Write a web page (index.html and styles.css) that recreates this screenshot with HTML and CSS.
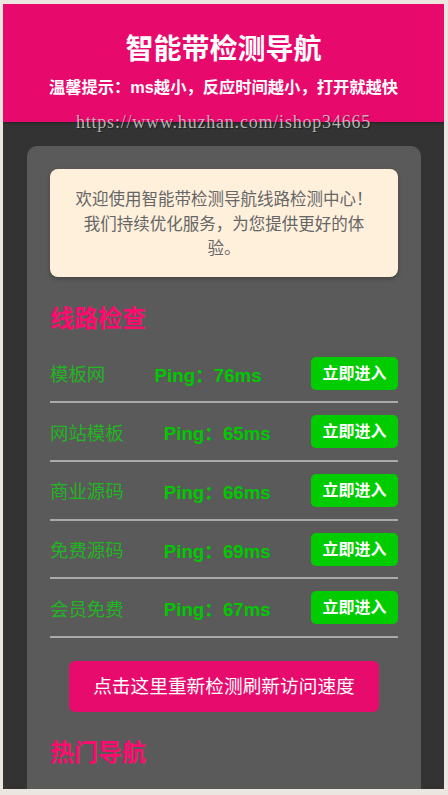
FILE: index.html
```html
<!DOCTYPE html>
<html lang="zh-CN">
<head>
<meta charset="utf-8">
<title>智能带检测导航</title>
<link rel="stylesheet" href="styles.css">
</head>
<body>
<div class="page">
  <header class="hero">
    <h1 class="hero-title">智能带检测导航</h1>
    <p class="hero-tip">温馨提示：ms越小，反应时间越小，打开就越快</p>
  </header>
  <main class="main">
    <section class="card">
      <div class="notice">欢迎使用智能带检测导航线路检测中心！<br>我们持续优化服务，为您提供更好的体验。</div>
      <h2 class="sec-title">线路检查</h2>
      <ul class="lines">
        <li class="line"><span class="name">模板网</span><span class="ping">Ping：76ms</span><a class="go">立即进入</a></li>
        <li class="line"><span class="name">网站模板</span><span class="ping">Ping：65ms</span><a class="go">立即进入</a></li>
        <li class="line"><span class="name">商业源码</span><span class="ping">Ping：66ms</span><a class="go">立即进入</a></li>
        <li class="line"><span class="name">免费源码</span><span class="ping">Ping：69ms</span><a class="go">立即进入</a></li>
        <li class="line"><span class="name">会员免费</span><span class="ping">Ping：67ms</span><a class="go">立即进入</a></li>
      </ul>
      <div class="refresh-wrap"><a class="refresh">点击这里重新检测刷新访问速度</a></div>
      <h2 class="sec-title sec-title-hot">热门导航</h2>
    </section>
  </main>
  <div class="watermark">https://www.huzhan.com/ishop34665</div>
</div>
</body>
</html>
```

FILE: styles.css
```css
html {
  background: #ebe6df;
}
body {
  margin: 0;
  font-family: "Liberation Sans", "Noto Sans CJK SC", sans-serif;
}
.page {
  position: relative;
  margin: 4px 4px 0 3px;
  width: 441px;
  height: 785px;
  overflow: hidden;
  background: #333333;
}
.hero {
  background: #e8096d;
  color: #fff;
  text-align: center;
  padding: 28px 10px 23px;
  box-shadow: 0 1px 2px rgba(0, 0, 0, 0.35);
  position: relative;
}
.hero-title {
  margin: 0;
  font-size: 28px;
  line-height: 36px;
  font-weight: bold;
}
.hero-tip {
  margin: 7px 0 0;
  font-size: 16.3px;
  line-height: 24px;
  font-weight: bold;
}
.main {
  padding: 24px 23px 0 24px;
}
.card {
  background: #5a5a5a;
  border-radius: 10px;
  padding: 23px 23px 40px;
}
.notice {
  background: #fff0dc;
  color: #666;
  border-radius: 8px;
  padding: 18px 21px 16px;
  font-size: 16.5px;
  line-height: 24.5px;
  text-align: center;
  box-shadow: 0 2px 4px rgba(0, 0, 0, 0.25);
}
.sec-title {
  margin: 26px 0 10px;
  color: #ff0a6e;
  font-size: 24px;
  line-height: 32px;
  font-weight: bold;
}
.sec-title-hot {
  margin-top: 25px;
}
.lines {
  list-style: none;
  margin: 0;
  padding: 0;
}
.line {
  display: flex;
  justify-content: space-between;
  align-items: center;
  padding: 12px 0 11.7px;
  border-bottom: 2px solid #aaaaaa;
}
.name {
  color: #22b422;
  font-size: 18.4px;
}
.ping {
  color: #00c800;
  font-size: 18.7px;
  font-weight: bold;
}
.go {
  background: #00cc00;
  color: #fff;
  font-size: 16px;
  font-weight: bold;
  height: 33px;
  line-height: 33px;
  padding: 0 11.5px;
  border-radius: 5px;
}
.refresh-wrap {
  display: flex;
  justify-content: center;
  margin-top: 23.5px;
}
.refresh {
  background: #e80b6e;
  color: #fff;
  font-size: 18.7px;
  line-height: 21px;
  padding: 15px 24px;
  border-radius: 6px;
}
.watermark {
  position: absolute;
  left: 0;
  right: 0;
  top: 109px;
  text-align: center;
  font-family: "Liberation Serif", serif;
  font-size: 18px;
  line-height: 18px;
  letter-spacing: 0.8px;
  color: rgba(205, 205, 205, 0.85);
  text-shadow: 1px 1px 1px rgba(0, 0, 0, 0.4);
  pointer-events: none;
}
```
